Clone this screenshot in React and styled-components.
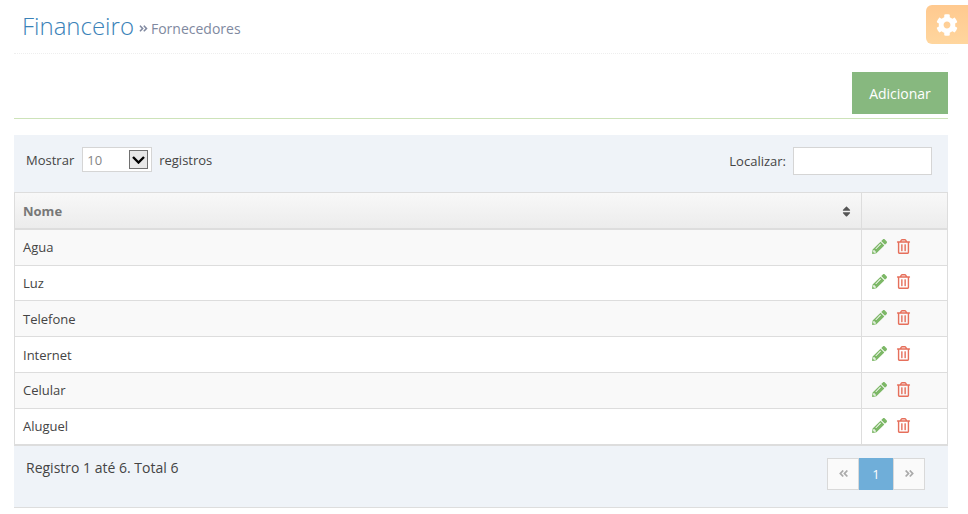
import styled, { createGlobalStyle } from "styled-components";
import {
  FaAngleDoubleLeft,
  FaAngleDoubleRight,
  FaCog,
  FaPencilAlt,
  FaRegTrashAlt,
  FaSort,
} from "react-icons/fa";

const GlobalStyle = createGlobalStyle`
  * { box-sizing: border-box; }
  html, body { margin: 0; background: #fff; }
  body {
    font-family: "Open Sans", "Liberation Sans", sans-serif;
    font-size: 13px;
    color: #444;
  }
`;

const Page = styled.div`
  padding: 0 20px 0 14px;
  width: 968px;
  height: 514px;
  overflow: hidden;
`;

const Header = styled.div`
  height: 54px;
  padding: 11px 0 0 8px;
  border-bottom: 1px dotted #eee;
  display: flex;
  align-items: flex-start;
  gap: 5px;
`;

const Title = styled.h1`
  margin: 0;
  font-size: 24px;
  font-weight: 300;
  line-height: 30px;
  color: #3a82b8;
`;

const SubTitle = styled.small`
  display: inline-flex;
  align-items: center;
  gap: 3px;
  height: 30px;
  padding-top: 4px;
  font-size: 14px;
  color: #8089a0;

  svg {
    width: 9px;
    height: 11px;
  }
`;

const SettingsTab = styled.div`
  position: absolute;
  top: 5px;
  right: 0;
  width: 42px;
  height: 39px;
  border-radius: 6px 0 0 6px;
  background: linear-gradient(#ffc98f, #ffd69e);
  color: #fff;
  display: flex;
  align-items: center;
  justify-content: center;
  font-size: 22px;
`;

const Toolbar = styled.div`
  height: 65px;
  padding-top: 18px;
  border-bottom: 1px solid #cde3b9;
  display: flex;
  justify-content: flex-end;
`;

const AddButton = styled.button`
  width: 96px;
  height: 42px;
  border: 0;
  background: #87b87f;
  color: #fff;
  font: inherit;
  font-size: 14px;
  padding: 0;
`;

const Panel = styled.div`
  margin-top: 16px;
  background: #eff3f8;
`;

const Filters = styled.div`
  height: 57px;
  padding: 12px 16px 0 12px;
  display: flex;
  justify-content: space-between;
  align-items: flex-start;
`;

const Label = styled.label`
  display: flex;
  align-items: center;
  gap: 7px;
  height: ${(p) => p.$height}px;
`;

const FakeSelect = styled.div`
  width: 70px;
  height: 25px;
  margin-left: 1px;
  border: 1px solid #d5d5d5;
  background: #fff;
  color: #858585;
  padding-left: 4px;
  display: flex;
  align-items: center;
  justify-content: space-between;
`;

const SelectArrow = styled.span`
  width: 19px;
  height: 19px;
  margin-right: 3px;
  background: #e8e8e8;
  border: 1px solid #707070;
  display: flex;
  align-items: center;
  justify-content: center;
`;

const SearchInput = styled.input`
  width: 139px;
  height: 28px;
  border: 1px solid #d5d5d5;
  background: #fff;
  padding: 0 6px;
`;

const Table = styled.table`
  width: 100%;
  border-collapse: separate;
  border-spacing: 0;
  background: #fff;
  border: 1px solid #ddd;
`;

const HeadCell = styled.th`
  height: 36.8px;
  padding: 2px 8px 0;
  text-align: left;
  font-size: 13px;
  font-weight: 700;
  color: #777;
  background: linear-gradient(#f8f8f8, #ececec);
  border-bottom: 2px solid #ddd;

  & + & {
    border-left: 1px solid #ddd;
  }
`;

const SortWrap = styled.div`
  display: flex;
  align-items: center;
  justify-content: space-between;

  svg {
    color: #555;
    font-size: 13px;
  }
`;

const Row = styled.tr`
  background: ${(p) => (p.$odd ? "#f9f9f9" : "#fff")};
`;

const Cell = styled.td`
  height: 35.8px;
  padding: 0 8px;
  border-bottom: 1px solid #ddd;
`;

const ActionCell = styled(Cell)`
  width: 86px;
  padding: 0 0 2px 10px;
  border-left: 1px solid #ddd;
`;

const Actions = styled.div`
  display: flex;
  align-items: center;
  gap: 9px;
  font-size: 15px;
`;

const Edit = styled(FaPencilAlt)`
  color: #7db867;
`;

const Trash = styled(FaRegTrashAlt)`
  color: #e66f5b;
`;

const Footer = styled.div`
  height: 62px;
  padding: 12px 23px 0 12px;
  border-bottom: 1px solid #ddd;
  display: flex;
  justify-content: space-between;
  align-items: flex-start;
  font-size: 14px;
`;

const Pager = styled.div`
  display: flex;
`;

const PageItem = styled.span`
  width: ${(p) => (p.$active ? "34px" : "32px")};
  height: 32px;
  display: flex;
  align-items: center;
  justify-content: center;
  font-size: ${(p) => (p.$active ? "13px" : "11px")};
  background: ${(p) => (p.$active ? "#6faed9" : "#fafafa")};
  color: ${(p) => (p.$active ? "#fff" : "#aaa")};
  border: ${(p) => (p.$active ? "0" : "1px solid #d9d9d9")};
`;

const fornecedores = ["Agua", "Luz", "Telefone", "Internet", "Celular", "Aluguel"];

export default function App() {
  return (
    <Page>
      <GlobalStyle />
      <Header>
        <Title>Financeiro</Title>
        <SubTitle>
          <FaAngleDoubleRight />
          Fornecedores
        </SubTitle>
      </Header>
      <SettingsTab>
        <FaCog />
      </SettingsTab>
      <Toolbar>
        <AddButton>Adicionar</AddButton>
      </Toolbar>
      <Panel>
        <Filters>
          <Label $height={25}>
            Mostrar
            <FakeSelect>
              10
              <SelectArrow>
                <svg width="13" height="8" viewBox="0 0 13 8">
                  <path d="M1 1l5.5 5.5L12 1" fill="none" stroke="#000" strokeWidth="2.4" />
                </svg>
              </SelectArrow>
            </FakeSelect>
            registros
          </Label>
          <Label $height={28}>
            Localizar:
            <SearchInput />
          </Label>
        </Filters>
        <Table>
          <thead>
            <tr>
              <HeadCell>
                <SortWrap>
                  Nome
                  <FaSort />
                </SortWrap>
              </HeadCell>
              <HeadCell />
            </tr>
          </thead>
          <tbody>
            {fornecedores.map((nome, i) => (
              <Row key={nome} $odd={i % 2 === 0}>
                <Cell>{nome}</Cell>
                <ActionCell>
                  <Actions>
                    <Edit />
                    <Trash />
                  </Actions>
                </ActionCell>
              </Row>
            ))}
          </tbody>
        </Table>
        <Footer>
          <span>Registro 1 até 6. Total 6</span>
          <Pager>
            <PageItem>
              <FaAngleDoubleLeft />
            </PageItem>
            <PageItem $active>1</PageItem>
            <PageItem>
              <FaAngleDoubleRight />
            </PageItem>
          </Pager>
        </Footer>
      </Panel>
    </Page>
  );
}
